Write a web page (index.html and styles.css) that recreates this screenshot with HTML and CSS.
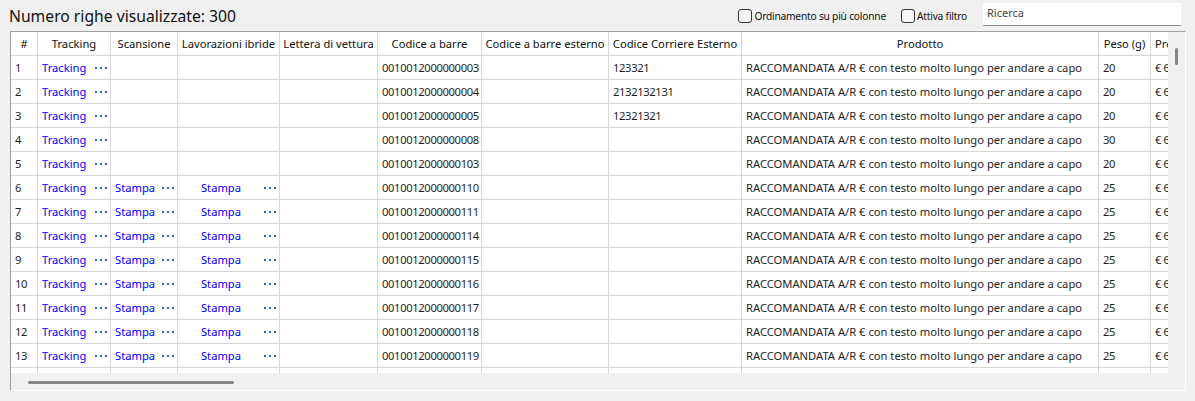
FILE: index.html
```html
<!DOCTYPE html>
<html lang="it">
<head>
<meta charset="utf-8">
<title>Griglia</title>
<link rel="stylesheet" href="styles.css">
</head>
<body>
<div class="topbar">
  <div class="title">Numero righe visualizzate: 300</div>
  <label class="check"><span class="box"></span><span>Ordinamento su più colonne</span></label>
  <label class="check check-2"><span class="box"></span><span>Attiva filtro</span></label>
  <div class="search">Ricerca</div>
</div>

<div class="frame">
  <div class="viewport">
    <div class="row head">
      <div class="cell c">#</div>
      <div class="cell c">Tracking</div>
      <div class="cell c">Scansione</div>
      <div class="cell c">Lavorazioni ibride</div>
      <div class="cell c">Lettera di vettura</div>
      <div class="cell c">Codice a barre</div>
      <div class="cell c">Codice a barre esterno</div>
      <div class="cell c">Codice Corriere Esterno</div>
      <div class="cell c">Prodotto</div>
      <div class="cell c">Peso (g)</div>
      <div class="cell">Prezzo</div>
    </div>

    <div class="row">
      <div class="cell n">1</div>
      <div class="cell act"><span class="link">Tracking</span><svg class="dots" width="12" height="2" viewBox="0 0 12 2"><rect x="0" width="2" height="2"/><rect x="5" width="2" height="2"/><rect x="10" width="2" height="2"/></svg></div>
      <div class="cell"></div>
      <div class="cell"></div>
      <div class="cell"></div>
      <div class="cell n">0010012000000003</div>
      <div class="cell"></div>
      <div class="cell n">123321</div>
      <div class="cell">RACCOMANDATA A/R € con testo molto lungo per andare a capo</div>
      <div class="cell n">20</div>
      <div class="cell n">€ 6,50</div>
    </div>
    <div class="row">
      <div class="cell n">2</div>
      <div class="cell act"><span class="link">Tracking</span><svg class="dots" width="12" height="2" viewBox="0 0 12 2"><rect x="0" width="2" height="2"/><rect x="5" width="2" height="2"/><rect x="10" width="2" height="2"/></svg></div>
      <div class="cell"></div>
      <div class="cell"></div>
      <div class="cell"></div>
      <div class="cell n">0010012000000004</div>
      <div class="cell"></div>
      <div class="cell n">2132132131</div>
      <div class="cell">RACCOMANDATA A/R € con testo molto lungo per andare a capo</div>
      <div class="cell n">20</div>
      <div class="cell n">€ 6,50</div>
    </div>
    <div class="row">
      <div class="cell n">3</div>
      <div class="cell act"><span class="link">Tracking</span><svg class="dots" width="12" height="2" viewBox="0 0 12 2"><rect x="0" width="2" height="2"/><rect x="5" width="2" height="2"/><rect x="10" width="2" height="2"/></svg></div>
      <div class="cell"></div>
      <div class="cell"></div>
      <div class="cell"></div>
      <div class="cell n">0010012000000005</div>
      <div class="cell"></div>
      <div class="cell n">12321321</div>
      <div class="cell">RACCOMANDATA A/R € con testo molto lungo per andare a capo</div>
      <div class="cell n">20</div>
      <div class="cell n">€ 6,50</div>
    </div>
    <div class="row">
      <div class="cell n">4</div>
      <div class="cell act"><span class="link">Tracking</span><svg class="dots" width="12" height="2" viewBox="0 0 12 2"><rect x="0" width="2" height="2"/><rect x="5" width="2" height="2"/><rect x="10" width="2" height="2"/></svg></div>
      <div class="cell"></div>
      <div class="cell"></div>
      <div class="cell"></div>
      <div class="cell n">0010012000000008</div>
      <div class="cell"></div>
      <div class="cell"></div>
      <div class="cell">RACCOMANDATA A/R € con testo molto lungo per andare a capo</div>
      <div class="cell n">30</div>
      <div class="cell n">€ 6,50</div>
    </div>
    <div class="row">
      <div class="cell n">5</div>
      <div class="cell act"><span class="link">Tracking</span><svg class="dots" width="12" height="2" viewBox="0 0 12 2"><rect x="0" width="2" height="2"/><rect x="5" width="2" height="2"/><rect x="10" width="2" height="2"/></svg></div>
      <div class="cell"></div>
      <div class="cell"></div>
      <div class="cell"></div>
      <div class="cell n">0010012000000103</div>
      <div class="cell"></div>
      <div class="cell"></div>
      <div class="cell">RACCOMANDATA A/R € con testo molto lungo per andare a capo</div>
      <div class="cell n">20</div>
      <div class="cell n">€ 6,50</div>
    </div>

    <div class="row">
      <div class="cell n">6</div>
      <div class="cell act"><span class="link">Tracking</span><svg class="dots" width="12" height="2" viewBox="0 0 12 2"><rect x="0" width="2" height="2"/><rect x="5" width="2" height="2"/><rect x="10" width="2" height="2"/></svg></div>
      <div class="cell act"><span class="link">Stampa</span><svg class="dots" width="12" height="2" viewBox="0 0 12 2"><rect x="0" width="2" height="2"/><rect x="5" width="2" height="2"/><rect x="10" width="2" height="2"/></svg></div>
      <div class="cell act"><span class="link mid">Stampa</span><svg class="dots" width="12" height="2" viewBox="0 0 12 2"><rect x="0" width="2" height="2"/><rect x="5" width="2" height="2"/><rect x="10" width="2" height="2"/></svg></div>
      <div class="cell"></div>
      <div class="cell n">0010012000000110</div>
      <div class="cell"></div>
      <div class="cell"></div>
      <div class="cell">RACCOMANDATA A/R € con testo molto lungo per andare a capo</div>
      <div class="cell n">25</div>
      <div class="cell n">€ 6,50</div>
    </div>
    <div class="row">
      <div class="cell n">7</div>
      <div class="cell act"><span class="link">Tracking</span><svg class="dots" width="12" height="2" viewBox="0 0 12 2"><rect x="0" width="2" height="2"/><rect x="5" width="2" height="2"/><rect x="10" width="2" height="2"/></svg></div>
      <div class="cell act"><span class="link">Stampa</span><svg class="dots" width="12" height="2" viewBox="0 0 12 2"><rect x="0" width="2" height="2"/><rect x="5" width="2" height="2"/><rect x="10" width="2" height="2"/></svg></div>
      <div class="cell act"><span class="link mid">Stampa</span><svg class="dots" width="12" height="2" viewBox="0 0 12 2"><rect x="0" width="2" height="2"/><rect x="5" width="2" height="2"/><rect x="10" width="2" height="2"/></svg></div>
      <div class="cell"></div>
      <div class="cell n">0010012000000111</div>
      <div class="cell"></div>
      <div class="cell"></div>
      <div class="cell">RACCOMANDATA A/R € con testo molto lungo per andare a capo</div>
      <div class="cell n">25</div>
      <div class="cell n">€ 6,50</div>
    </div>
    <div class="row">
      <div class="cell n">8</div>
      <div class="cell act"><span class="link">Tracking</span><svg class="dots" width="12" height="2" viewBox="0 0 12 2"><rect x="0" width="2" height="2"/><rect x="5" width="2" height="2"/><rect x="10" width="2" height="2"/></svg></div>
      <div class="cell act"><span class="link">Stampa</span><svg class="dots" width="12" height="2" viewBox="0 0 12 2"><rect x="0" width="2" height="2"/><rect x="5" width="2" height="2"/><rect x="10" width="2" height="2"/></svg></div>
      <div class="cell act"><span class="link mid">Stampa</span><svg class="dots" width="12" height="2" viewBox="0 0 12 2"><rect x="0" width="2" height="2"/><rect x="5" width="2" height="2"/><rect x="10" width="2" height="2"/></svg></div>
      <div class="cell"></div>
      <div class="cell n">0010012000000114</div>
      <div class="cell"></div>
      <div class="cell"></div>
      <div class="cell">RACCOMANDATA A/R € con testo molto lungo per andare a capo</div>
      <div class="cell n">25</div>
      <div class="cell n">€ 6,50</div>
    </div>
    <div class="row">
      <div class="cell n">9</div>
      <div class="cell act"><span class="link">Tracking</span><svg class="dots" width="12" height="2" viewBox="0 0 12 2"><rect x="0" width="2" height="2"/><rect x="5" width="2" height="2"/><rect x="10" width="2" height="2"/></svg></div>
      <div class="cell act"><span class="link">Stampa</span><svg class="dots" width="12" height="2" viewBox="0 0 12 2"><rect x="0" width="2" height="2"/><rect x="5" width="2" height="2"/><rect x="10" width="2" height="2"/></svg></div>
      <div class="cell act"><span class="link mid">Stampa</span><svg class="dots" width="12" height="2" viewBox="0 0 12 2"><rect x="0" width="2" height="2"/><rect x="5" width="2" height="2"/><rect x="10" width="2" height="2"/></svg></div>
      <div class="cell"></div>
      <div class="cell n">0010012000000115</div>
      <div class="cell"></div>
      <div class="cell"></div>
      <div class="cell">RACCOMANDATA A/R € con testo molto lungo per andare a capo</div>
      <div class="cell n">25</div>
      <div class="cell n">€ 6,50</div>
    </div>
    <div class="row">
      <div class="cell n">10</div>
      <div class="cell act"><span class="link">Tracking</span><svg class="dots" width="12" height="2" viewBox="0 0 12 2"><rect x="0" width="2" height="2"/><rect x="5" width="2" height="2"/><rect x="10" width="2" height="2"/></svg></div>
      <div class="cell act"><span class="link">Stampa</span><svg class="dots" width="12" height="2" viewBox="0 0 12 2"><rect x="0" width="2" height="2"/><rect x="5" width="2" height="2"/><rect x="10" width="2" height="2"/></svg></div>
      <div class="cell act"><span class="link mid">Stampa</span><svg class="dots" width="12" height="2" viewBox="0 0 12 2"><rect x="0" width="2" height="2"/><rect x="5" width="2" height="2"/><rect x="10" width="2" height="2"/></svg></div>
      <div class="cell"></div>
      <div class="cell n">0010012000000116</div>
      <div class="cell"></div>
      <div class="cell"></div>
      <div class="cell">RACCOMANDATA A/R € con testo molto lungo per andare a capo</div>
      <div class="cell n">25</div>
      <div class="cell n">€ 6,50</div>
    </div>
    <div class="row">
      <div class="cell n">11</div>
      <div class="cell act"><span class="link">Tracking</span><svg class="dots" width="12" height="2" viewBox="0 0 12 2"><rect x="0" width="2" height="2"/><rect x="5" width="2" height="2"/><rect x="10" width="2" height="2"/></svg></div>
      <div class="cell act"><span class="link">Stampa</span><svg class="dots" width="12" height="2" viewBox="0 0 12 2"><rect x="0" width="2" height="2"/><rect x="5" width="2" height="2"/><rect x="10" width="2" height="2"/></svg></div>
      <div class="cell act"><span class="link mid">Stampa</span><svg class="dots" width="12" height="2" viewBox="0 0 12 2"><rect x="0" width="2" height="2"/><rect x="5" width="2" height="2"/><rect x="10" width="2" height="2"/></svg></div>
      <div class="cell"></div>
      <div class="cell n">0010012000000117</div>
      <div class="cell"></div>
      <div class="cell"></div>
      <div class="cell">RACCOMANDATA A/R € con testo molto lungo per andare a capo</div>
      <div class="cell n">25</div>
      <div class="cell n">€ 6,50</div>
    </div>
    <div class="row">
      <div class="cell n">12</div>
      <div class="cell act"><span class="link">Tracking</span><svg class="dots" width="12" height="2" viewBox="0 0 12 2"><rect x="0" width="2" height="2"/><rect x="5" width="2" height="2"/><rect x="10" width="2" height="2"/></svg></div>
      <div class="cell act"><span class="link">Stampa</span><svg class="dots" width="12" height="2" viewBox="0 0 12 2"><rect x="0" width="2" height="2"/><rect x="5" width="2" height="2"/><rect x="10" width="2" height="2"/></svg></div>
      <div class="cell act"><span class="link mid">Stampa</span><svg class="dots" width="12" height="2" viewBox="0 0 12 2"><rect x="0" width="2" height="2"/><rect x="5" width="2" height="2"/><rect x="10" width="2" height="2"/></svg></div>
      <div class="cell"></div>
      <div class="cell n">0010012000000118</div>
      <div class="cell"></div>
      <div class="cell"></div>
      <div class="cell">RACCOMANDATA A/R € con testo molto lungo per andare a capo</div>
      <div class="cell n">25</div>
      <div class="cell n">€ 6,50</div>
    </div>
    <div class="row">
      <div class="cell n">13</div>
      <div class="cell act"><span class="link">Tracking</span><svg class="dots" width="12" height="2" viewBox="0 0 12 2"><rect x="0" width="2" height="2"/><rect x="5" width="2" height="2"/><rect x="10" width="2" height="2"/></svg></div>
      <div class="cell act"><span class="link">Stampa</span><svg class="dots" width="12" height="2" viewBox="0 0 12 2"><rect x="0" width="2" height="2"/><rect x="5" width="2" height="2"/><rect x="10" width="2" height="2"/></svg></div>
      <div class="cell act"><span class="link mid">Stampa</span><svg class="dots" width="12" height="2" viewBox="0 0 12 2"><rect x="0" width="2" height="2"/><rect x="5" width="2" height="2"/><rect x="10" width="2" height="2"/></svg></div>
      <div class="cell"></div>
      <div class="cell n">0010012000000119</div>
      <div class="cell"></div>
      <div class="cell"></div>
      <div class="cell">RACCOMANDATA A/R € con testo molto lungo per andare a capo</div>
      <div class="cell n">25</div>
      <div class="cell n">€ 6,50</div>
    </div>
    <div class="row">
      <div class="cell"></div>
      <div class="cell"></div>
      <div class="cell"></div>
      <div class="cell"></div>
      <div class="cell"></div>
      <div class="cell"></div>
      <div class="cell"></div>
      <div class="cell"></div>
      <div class="cell"></div>
      <div class="cell"></div>
      <div class="cell"></div>
    </div>
  </div>
  <div class="vscroll"><div class="vthumb"></div></div>
  <div class="hscroll"><div class="hthumb"></div></div>
  <div class="corner"></div>
</div>
</body>
</html>
```
FILE: styles.css
```css
* { box-sizing: border-box; }

body {
  margin: 0;
  background: #f0f0f0;
  font-family: "Noto Sans", "Open Sans", sans-serif;
  color: #1e1e1e;
}

.topbar {
  display: flex;
  align-items: center;
  height: 31px;
  padding: 0 14px 0 9px;
}

.title {
  font-size: 15.7px;
  color: #111;
  margin-right: auto;
  padding-top: 1px;
}

.check {
  display: flex;
  align-items: center;
  gap: 2px;
  font-size: 10.2px;
  letter-spacing: -0.2px;
  color: #111;
  margin-top: 1px;
}

.check-2 {
  margin-left: 15px;
}

.box {
  width: 14px;
  height: 14px;
  border: 1px solid #333;
  border-radius: 3px;
  background: #f7f7f7;
}

.search {
  align-self: flex-start;
  margin-top: 3px;
  margin-left: 16px;
  width: 198px;
  height: 23px;
  background: #fff;
  border-bottom: 1px solid #8a8a8a;
  font-size: 11px;
  color: #444;
  padding: 2px 4px 0 4px;
}

.frame {
  margin-left: 10px;
  width: 1176px;
  height: 360px;
  border-left: 1px solid #a0a0a0;
  border-top: 1px solid #a0a0a0;
  border-right: 1px solid #fff;
  border-bottom: 1px solid #fff;
  display: grid;
  grid-template-columns: 1157px 17px;
  grid-template-rows: 341px 17px;
}

.viewport {
  overflow: hidden;
  background: #fff;
  font-size: 11.2px;
}

.row {
  display: grid;
  grid-template-columns: 27px 73px 67px 102px 98px 104px 127px 133px 357px 52px 80px;
  width: max-content;
  height: 24px;
}

.cell {
  display: flex;
  align-items: center;
  padding: 0 4px;
  border-right: 1px solid #d6d6d6;
  border-bottom: 1px solid #d6d6d6;
  white-space: nowrap;
  overflow: hidden;
  color: #1e1e1e;
}

.cell.n {
  letter-spacing: -0.35px;
}

.head .cell {
  color: #111;
}

.cell.c {
  justify-content: center;
}

.act {
  padding-right: 3px;
  gap: 4px;
}

.link {
  color: #0000f8;
  flex: 1;
}

.link.mid {
  text-align: center;
}

.dots {
  flex: none;
  fill: #3a6cb0;
}

.vscroll {
  background: #f0f0f0;
  padding: 16px 0 0 7px;
}

.vthumb {
  width: 3px;
  height: 17px;
  background: #868686;
  border-radius: 1.5px;
}

.hscroll {
  background: #f0f0f0;
  padding: 8px 0 0 17px;
}

.hthumb {
  width: 206px;
  height: 3px;
  background: #868686;
  border-radius: 1.5px;
}

.corner {
  background: #f0f0f0;
}
```
